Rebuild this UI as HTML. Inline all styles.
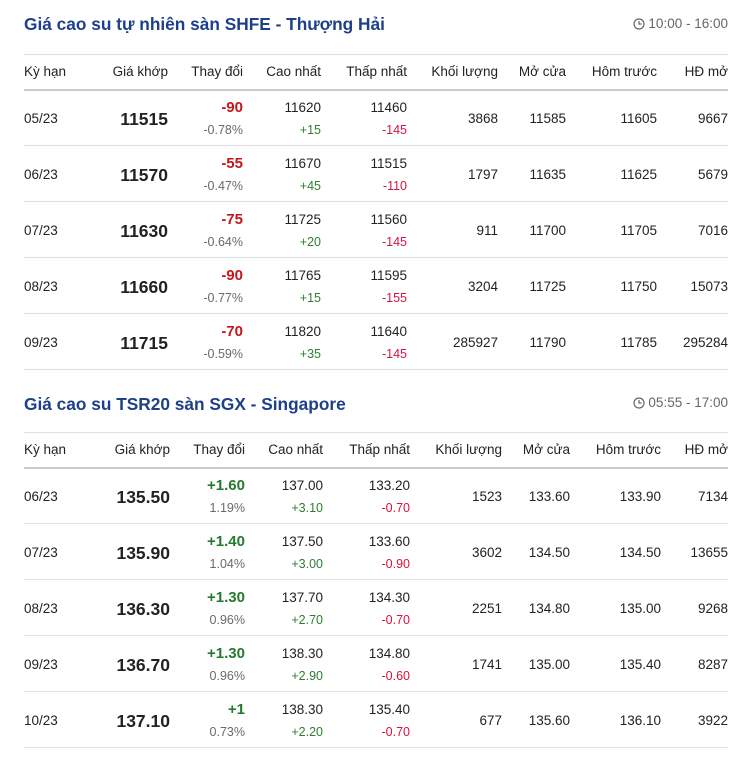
<!DOCTYPE html>
<html><head><meta charset="utf-8"><style>
*{margin:0;padding:0;box-sizing:border-box}
body{width:755px;height:766px;background:#fff;font-family:"Liberation Sans",Arial,sans-serif;color:#222;position:relative;overflow:hidden}
.t{position:absolute;left:24px;font-size:17.3px;font-weight:bold;color:#1e3f8a;white-space:nowrap}
.tm{position:absolute;right:27px;font-size:13.5px;color:#666;white-space:nowrap}
.tm svg{vertical-align:-2px;margin-right:3px}
.ln{position:absolute;left:24px;width:704px;height:1px;background:#dde1e6}
.ln2{background:#c8ccd2;height:1.5px}
.c{position:absolute;white-space:nowrap;font-size:13.5px;line-height:16px;text-align:right}
.h{color:#222}
.b{font-weight:bold;font-size:17.5px;line-height:20px;color:#222}
.rd{color:#c4161c;font-weight:bold;font-size:15px}
.gb{color:#237a2e;font-weight:bold;font-size:15px}
.p{color:#6a6a6a;font-size:12.5px}
.g{color:#2e7d32;font-size:12.5px}
.r{color:#d4143e;font-size:12.5px}
</style></head><body>
<div class="t" style="top:14px">Giá cao su tự nhiên sàn SHFE - Thượng Hải</div>
<div class="tm" style="top:16px"><svg width="12" height="12" viewBox="0 0 12 12"><circle cx="6" cy="6" r="5" fill="none" stroke="#666" stroke-width="1.2"/><path d="M6 3v3h2.5" fill="none" stroke="#666" stroke-width="1.2"/></svg>10:00 - 16:00</div>
<div class="t" style="top:394px">Giá cao su TSR20 sàn SGX - Singapore</div>
<div class="tm" style="top:395px"><svg width="12" height="12" viewBox="0 0 12 12"><circle cx="6" cy="6" r="5" fill="none" stroke="#666" stroke-width="1.2"/><path d="M6 3v3h2.5" fill="none" stroke="#666" stroke-width="1.2"/></svg>05:55 - 17:00</div>
<div id="root"></div>
<script>
function build(top,rights,rows){
 var h='';
 h+='<div class="ln" style="top:'+top+'px"></div>';
 var hdr=['Kỳ hạn','Giá khớp','Thay đổi','Cao nhất','Thấp nhất','Khối lượng','Mở cửa','Hôm trước','HĐ mở'];
 var hy=top+10;
 h+='<div class="c h" style="left:24px;top:'+hy+'px;text-align:left">'+hdr[0]+'</div>';
 for(var i=1;i<9;i++)h+='<div class="c h" style="right:'+(755-rights[i])+'px;top:'+hy+'px">'+hdr[i]+'</div>';
 var y=top+35;
 h+='<div class="ln ln2" style="top:'+y+'px"></div>';
 rows.forEach(function(r){
  var mid=y+30;
  h+='<div class="c" style="left:24px;top:'+(mid-8)+'px;text-align:left">'+r[0]+'</div>';
  h+='<div class="c b" style="right:'+(755-rights[1])+'px;top:'+(mid-10)+'px">'+r[1]+'</div>';
  var up=r[2].charAt(0)=='+';
  h+='<div class="c '+(up?'gb':'rd')+'" style="right:'+(755-rights[2])+'px;top:'+(mid-19)+'px">'+r[2]+'</div>';
  h+='<div class="c p" style="right:'+(755-rights[2])+'px;top:'+(mid+3)+'px">'+r[3]+'</div>';
  h+='<div class="c" style="right:'+(755-rights[3])+'px;top:'+(mid-19)+'px">'+r[4]+'</div>';
  h+='<div class="c g" style="right:'+(755-rights[3])+'px;top:'+(mid+3)+'px">'+r[5]+'</div>';
  h+='<div class="c" style="right:'+(755-rights[4])+'px;top:'+(mid-19)+'px">'+r[6]+'</div>';
  h+='<div class="c r" style="right:'+(755-rights[4])+'px;top:'+(mid+3)+'px">'+r[7]+'</div>';
  for(var k=5;k<9;k++)h+='<div class="c" style="right:'+(755-rights[k])+'px;top:'+(mid-8)+'px">'+r[k+3]+'</div>';
  y+=56;
  h+='<div class="ln" style="top:'+y+'px"></div>';
 });
 return h;
}
var A=[
['05/23','11515','-90','-0.78%','11620','+15','11460','-145','3868','11585','11605','9667'],
['06/23','11570','-55','-0.47%','11670','+45','11515','-110','1797','11635','11625','5679'],
['07/23','11630','-75','-0.64%','11725','+20','11560','-145','911','11700','11705','7016'],
['08/23','11660','-90','-0.77%','11765','+15','11595','-155','3204','11725','11750','15073'],
['09/23','11715','-70','-0.59%','11820','+35','11640','-145','285927','11790','11785','295284']];
var B=[
['06/23','135.50','+1.60','1.19%','137.00','+3.10','133.20','-0.70','1523','133.60','133.90','7134'],
['07/23','135.90','+1.40','1.04%','137.50','+3.00','133.60','-0.90','3602','134.50','134.50','13655'],
['08/23','136.30','+1.30','0.96%','137.70','+2.70','134.30','-0.70','2251','134.80','135.00','9268'],
['09/23','136.70','+1.30','0.96%','138.30','+2.90','134.80','-0.60','1741','135.00','135.40','8287'],
['10/23','137.10','+1','0.73%','138.30','+2.20','135.40','-0.70','677','135.60','136.10','3922']];
document.getElementById('root').innerHTML=
 build(54,[0,168,243,321,407,498,566,657,728],A)+
 build(432,[0,170,245,323,410,502,570,661,728],B);
</script>
</body></html>
